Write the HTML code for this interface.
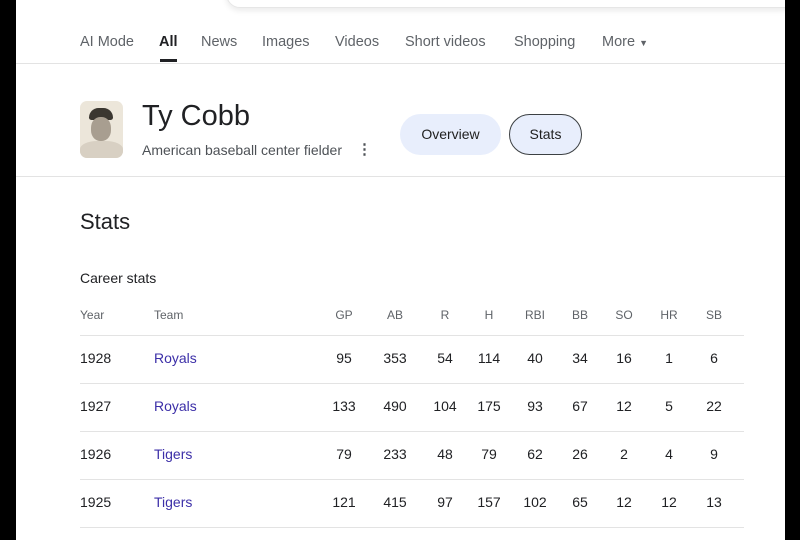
<!DOCTYPE html>
<html><head><meta charset="utf-8"><style>
body{margin:0;width:800px;height:540px;overflow:hidden;background:#000;font-family:"Liberation Sans",Arial,sans-serif;position:relative}
#pg{position:absolute;left:16px;top:0;width:769px;height:540px;background:#fff;overflow:hidden}
.a{position:absolute;white-space:nowrap}
.tab{position:absolute;top:34px;font-size:14.5px;color:#5f6368}
.hl{position:absolute;left:64px;width:664px;height:1px;background:#e3e3e3}
.c{position:absolute;width:40px;text-align:center;font-size:14px;color:#202124}
.h{font-size:12px;color:#5f6368}
.tm{color:#3c2fa8}
</style></head><body><div id="pg">
<div class="a" style="left:210px;top:-10px;width:570px;height:16px;border:1px solid #e6e6e6;border-radius:0 0 14px 14px;box-shadow:0 3px 6px rgba(0,0,0,.08)"></div>
<div class="tab" style="left:64px">AI Mode</div>
<div class="tab" style="left:143px;color:#202124;font-weight:bold">All</div>
<div class="a" style="left:144px;top:59px;width:17px;height:3px;background:#202124"></div>
<div class="tab" style="left:185px">News</div>
<div class="tab" style="left:246px">Images</div>
<div class="tab" style="left:319px">Videos</div>
<div class="tab" style="left:389px">Short videos</div>
<div class="tab" style="left:498px">Shopping</div>
<div class="tab" style="left:586px">More <span style="font-size:9px">▼</span></div>
<div class="a" style="left:0;top:63px;width:769px;height:1px;background:#e3e3e3"></div>
<div class="a" style="left:64px;top:101px;width:43px;height:57px;border-radius:7px;overflow:hidden;background:#ece6da">
<div class="a" style="left:9px;top:7px;width:24px;height:12px;border-radius:12px 12px 3px 3px;background:#3a3630"></div>
<div class="a" style="left:11px;top:16px;width:20px;height:24px;border-radius:45%;background:#a89e90"></div>
<div class="a" style="left:0;top:40px;width:43px;height:20px;border-radius:40% 40% 0 0;background:#d8d0c3"></div>
</div>
<div class="a" style="left:126px;top:100px;font-size:29px;color:#202124">Ty Cobb</div>
<div class="a" style="left:126px;top:142px;font-size:14px;color:#4d5156">American baseball center fielder</div>
<div class="a" style="left:341px;top:140px;font-size:15px;color:#4d5156;font-weight:bold">⋮</div>
<div class="a" style="left:384px;top:114px;width:101px;height:41px;border-radius:21px;background:#e8eefc;font-size:14px;color:#1f1f1f;text-align:center;line-height:41px">Overview</div>
<div class="a" style="left:493px;top:114px;width:71px;height:39px;border-radius:21px;background:#e8eefc;border:1px solid #3c4043;font-size:14px;color:#1f1f1f;text-align:center;line-height:39px">Stats</div>
<div class="a" style="left:0;top:176px;width:769px;height:1px;background:#e3e3e3"></div>
<div class="a" style="left:64px;top:209px;font-size:22px;color:#202124">Stats</div>
<div class="a" style="left:64px;top:270px;font-size:14px;color:#202124">Career stats</div>
<div id="t"></div>
</div>
<script>
var cx=[344,395,445,489,535,580,624,669,714],hd=["GP","AB","R","H","RBI","BB","SO","HR","SB"];
var rows=[["1928","Royals",95,353,54,114,40,34,16,1,6],["1927","Royals",133,490,104,175,93,67,12,5,22],["1926","Tigers",79,233,48,79,62,26,2,4,9],["1925","Tigers",121,415,97,157,102,65,12,12,13]];
var h="",o=16;
h+='<div class="a h" style="left:64px;top:308px">Year</div><div class="a h" style="left:138px;top:308px">Team</div>';
hd.forEach(function(s,i){h+='<div class="c h" style="left:'+(cx[i]-20-o)+'px;top:308px">'+s+'</div>'});
[335,383,431,479,527].forEach(function(y){h+='<div class="hl" style="top:'+y+'px"></div>'});
rows.forEach(function(r,j){var y=350+j*48;
h+='<div class="a" style="left:64px;top:'+y+'px;font-size:14px;color:#202124">'+r[0]+'</div><div class="a tm" style="left:138px;top:'+y+'px;font-size:14px">'+r[1]+'</div>';
for(var i=0;i<9;i++)h+='<div class="c" style="left:'+(cx[i]-20-o)+'px;top:'+y+'px">'+r[i+2]+'</div>';});
document.getElementById("t").innerHTML=h;
</script>
</body></html>
